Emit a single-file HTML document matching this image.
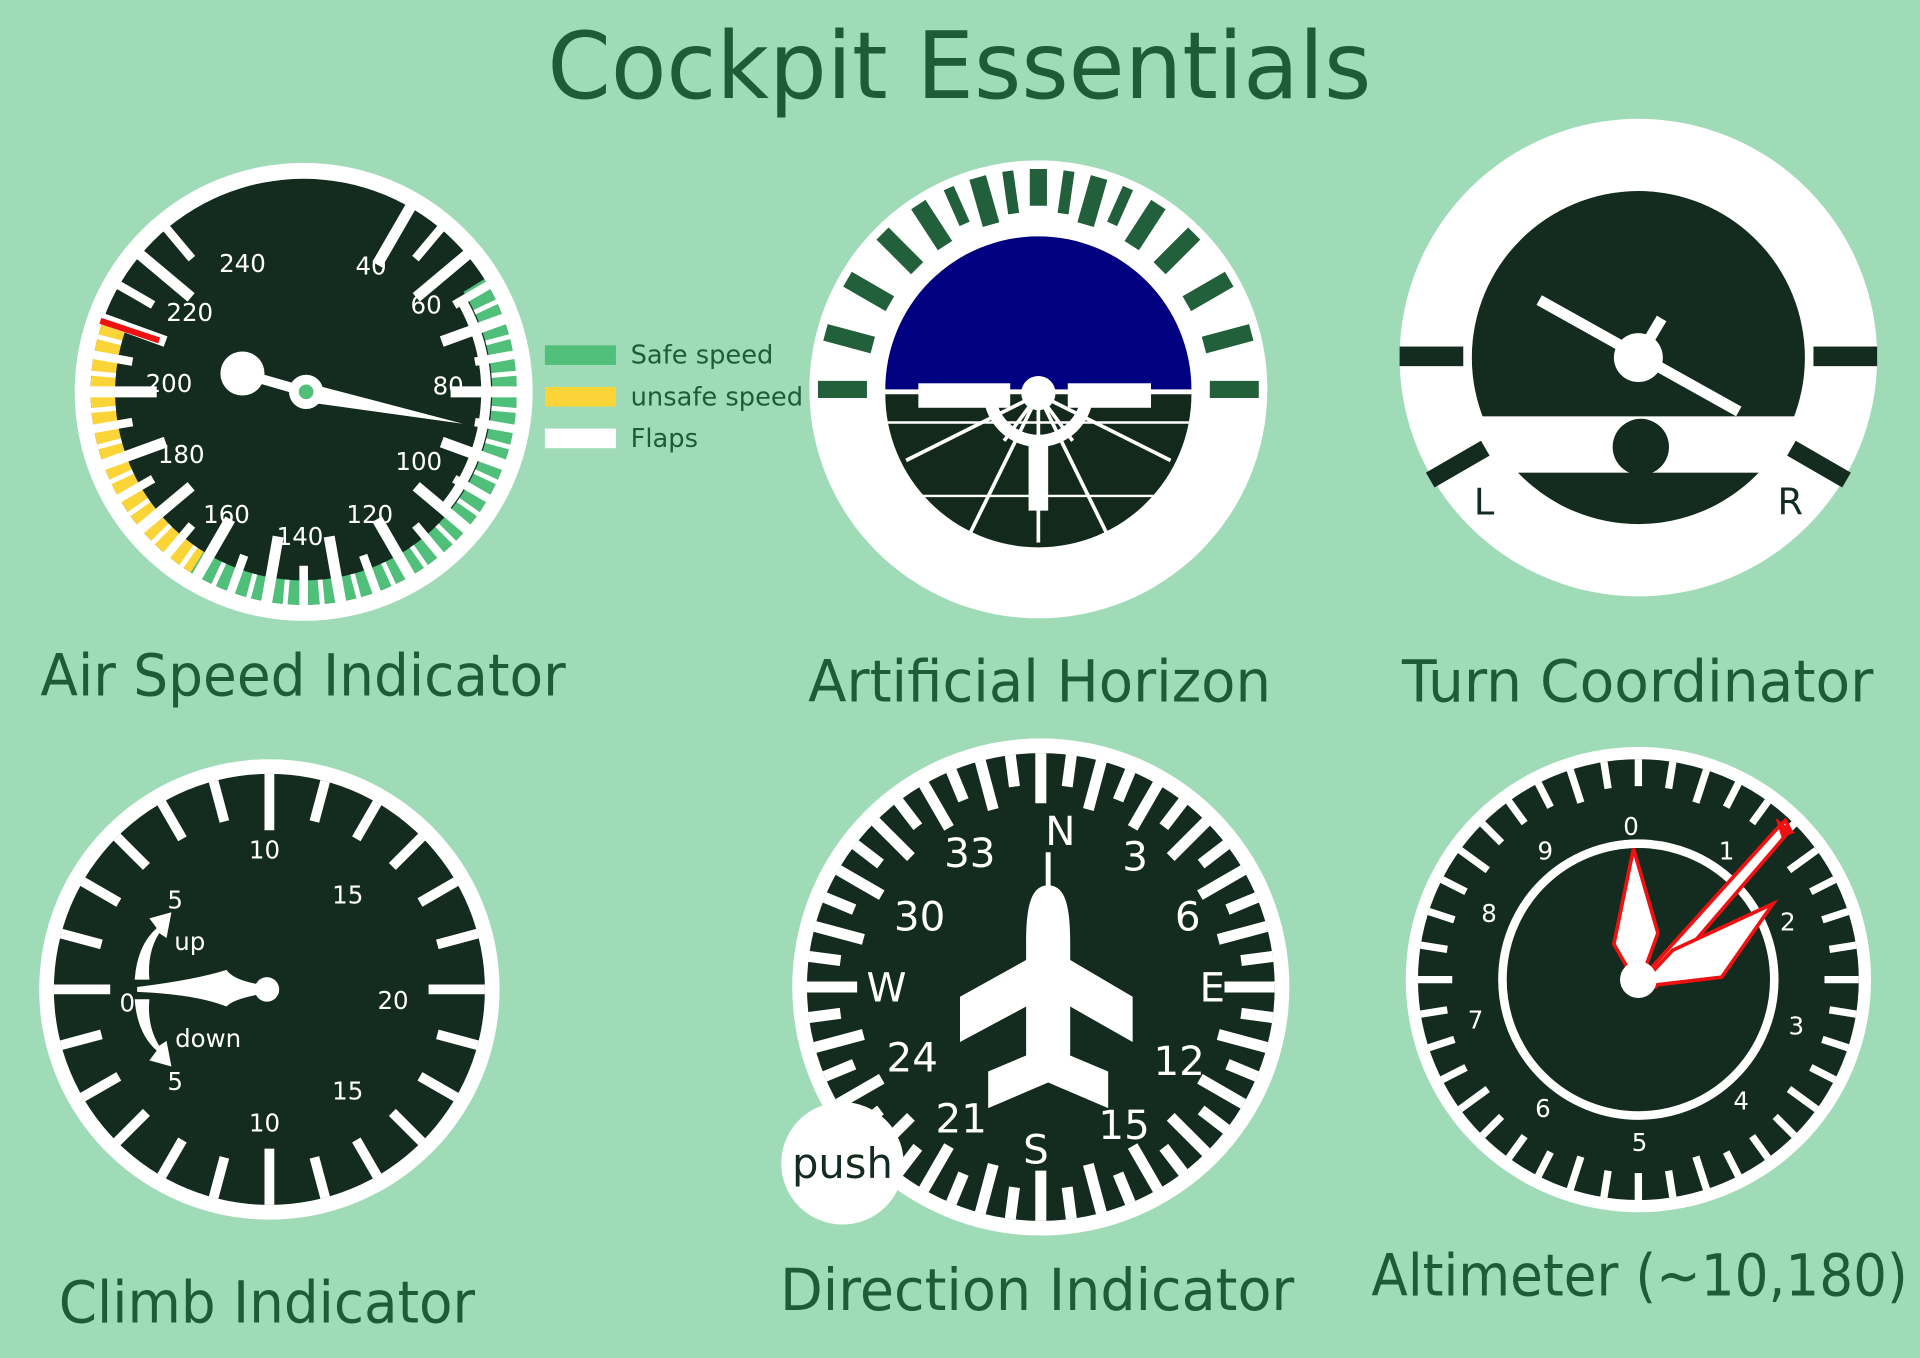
<!DOCTYPE html>
<html><head><meta charset="utf-8"><style>
html,body{margin:0;padding:0;background:#9fdbb6;}
svg{display:block}
text{font-family:"DejaVu Sans","Liberation Sans",sans-serif;}
</style></head><body>
<svg id="s" width="1920" height="1358" viewBox="0 0 1568 1109" xmlns="http://www.w3.org/2000/svg">
<rect width="1568" height="1109" fill="#9fdbb6"/>
<text x="447" y="80" textLength="673" lengthAdjust="spacingAndGlyphs" font-size="76" fill="#1e5c36" font-family="DejaVu Sans, sans-serif">Cockpit Essentials</text>

<!-- Air speed -->
<circle cx="248" cy="320" r="187" fill="#fff"/>
<circle cx="248" cy="320" r="174" fill="#142b1f"/>
<g id="asband"></g>
<g id="asticks"></g>
<line x1="82" y1="262" x2="130" y2="278" stroke="#e11" stroke-width="5"/>
<g fill="#fff" font-size="20" text-anchor="middle">
<text x="198" y="222">240</text><text x="303" y="224">40</text>
<text x="155" y="262">220</text><text x="348" y="256">60</text>
<text x="138" y="320">200</text><text x="366" y="322">80</text>
<text x="148" y="378">180</text><text x="342" y="384">100</text>
<text x="185" y="427">160</text><text x="302" y="427">120</text>
<text x="245" y="445">140</text>
</g>
<circle cx="198" cy="305" r="18" fill="#fff"/>
<line x1="198" y1="305" x2="250" y2="320" stroke="#fff" stroke-width="8"/>
<polygon points="248,312 378,346 248,328" fill="#fff"/>
<circle cx="250" cy="320" r="14" fill="#fff"/>
<circle cx="250" cy="320" r="6" fill="#4fbf7a"/>
<rect x="445" y="282" width="58" height="16" fill="#4fbf7a"/>
<rect x="445" y="316" width="58" height="16" fill="#fbd438"/>
<rect x="445" y="350" width="58" height="16" fill="#fff"/>
<g fill="#1e5c36" font-size="21" font-family="DejaVu Sans, sans-serif">
<text x="515" y="297">Safe speed</text><text x="515" y="331">unsafe speed</text><text x="515" y="365">Flaps</text>
</g>
<text x="33" y="568" textLength="429" lengthAdjust="spacingAndGlyphs" font-size="47" fill="#1e5c36" font-family="DejaVu Sans, sans-serif">Air Speed Indicator</text>

<!-- Artificial horizon -->
<circle cx="848" cy="318" r="187" fill="#fff"/>
<path d="M723,318 A125,125 0 0 1 973,318 Z" fill="#000080"/>
<path d="M723,322 A125,125 0 0 0 973,322 Z" fill="#12291b"/>
<g id="ahticks"></g>
<g stroke="#fff" stroke-width="3">
<line x1="848" y1="322" x2="740" y2="376"/><line x1="848" y1="322" x2="956" y2="376"/>
<line x1="848" y1="322" x2="790" y2="440"/><line x1="848" y1="322" x2="906" y2="440"/>
<line x1="848" y1="322" x2="820" y2="360"/><line x1="848" y1="322" x2="876" y2="360"/>
<line x1="848" y1="322" x2="848" y2="443"/>
<line x1="718" y1="345" x2="978" y2="345" stroke-width="2"/>
<line x1="718" y1="405" x2="978" y2="405" stroke-width="2"/>
</g>
<rect x="750" y="313" width="75" height="20" fill="#fff"/>
<rect x="872" y="313" width="68" height="20" fill="#fff"/>
<path d="M808,320 A40,40 0 0 0 888,320" fill="none" stroke="#fff" stroke-width="10"/>
<rect x="840" y="360" width="16" height="57" fill="#fff"/>
<circle cx="848" cy="321" r="14" fill="#fff"/>
<text x="660" y="573" textLength="378" lengthAdjust="spacingAndGlyphs" font-size="47" fill="#1e5c36" font-family="DejaVu Sans, sans-serif">Artificial Horizon</text>

<!-- Turn coordinator -->
<circle cx="1338" cy="292" r="195" fill="#fff"/>
<circle cx="1338" cy="292" r="136" fill="#142b1f"/>
<rect x="1190" y="340" width="300" height="46" fill="#fff"/>
<circle cx="1340" cy="365" r="23" fill="#142b1f"/>
<rect x="1143" y="283" width="52" height="16" fill="#142b1f"/>
<rect x="1481" y="283" width="52" height="16" fill="#142b1f"/>
<line x1="1168" y1="392" x2="1213" y2="366" stroke="#142b1f" stroke-width="14"/>
<line x1="1508" y1="392" x2="1463" y2="366" stroke="#142b1f" stroke-width="14"/>
<text x="1212" y="420" text-anchor="middle" font-size="30" fill="#142b1f">L</text>
<text x="1462" y="420" text-anchor="middle" font-size="30" fill="#142b1f">R</text>
<line x1="1257" y1="245" x2="1420" y2="336" stroke="#fff" stroke-width="9"/>
<line x1="1338" y1="292" x2="1357" y2="260" stroke="#fff" stroke-width="9"/>
<circle cx="1338" cy="292" r="20" fill="#fff"/>
<text x="1145" y="573" textLength="385" lengthAdjust="spacingAndGlyphs" font-size="47" fill="#1e5c36" font-family="DejaVu Sans, sans-serif">Turn Coordinator</text>

<!-- Climb -->
<circle cx="220" cy="808" r="188" fill="#fff"/>
<circle cx="220" cy="808" r="176" fill="#142b1f"/>
<g id="clticks"></g>
<g fill="#fff" font-size="20" text-anchor="middle">
<text x="216" y="701">10</text><text x="284" y="738">15</text><text x="321" y="824">20</text>
<text x="284" y="898">15</text><text x="216" y="924">10</text>
<text x="143" y="742">5</text><text x="104" y="826">0</text><text x="143" y="890">5</text>
<text x="155" y="776">up</text><text x="170" y="855">down</text>
</g>
<path d="M110,800 Q112,772 128,758 L122,750 L140,745 L136,766 L130,762 Q120,778 122,800 Z" fill="#fff"/>
<path d="M110,816 Q112,844 128,858 L122,866 L140,871 L136,850 L130,854 Q120,838 122,816 Z" fill="#fff"/>
<path d="M112,806 Q160,800 185,792 Q190,800 212,804 L212,812 Q190,816 185,822 Q160,812 112,810 Z" fill="#fff"/>
<circle cx="218" cy="808" r="10" fill="#fff"/>
<text x="48" y="1080" textLength="340" lengthAdjust="spacingAndGlyphs" font-size="47" fill="#1e5c36" font-family="DejaVu Sans, sans-serif">Climb Indicator</text>

<!-- Direction -->
<circle cx="850" cy="806" r="203" fill="#fff"/>
<circle cx="850" cy="806" r="191" fill="#142b1f"/>
<g id="dirticks"></g>
<g fill="#fff" font-size="33" text-anchor="middle">
<text x="866" y="690">N</text><text x="927" y="711">3</text><text x="970" y="760">6</text>
<text x="990" y="818">E</text><text x="963" y="878">12</text><text x="918" y="930">15</text>
<text x="846" y="950">S</text><text x="785" y="925">21</text><text x="745" y="875">24</text>
<text x="724" y="818">W</text><text x="751" y="760">30</text><text x="792" y="708">33</text>
</g>
<line x1="856" y1="696" x2="856" y2="724" stroke="#fff" stroke-width="4"/>
<path d="M856,723 C842,723 838,740 838,770 L838,784 L784,814 L784,851 L838,822 L838,862 L807,875 L807,905 L856,884 L905,905 L905,875 L874,862 L874,822 L925,851 L925,814 L874,784 L874,770 C874,740 870,723 856,723 Z" fill="#fff"/>
<circle cx="688" cy="950" r="50" fill="#fff"/>
<text x="688" y="962" text-anchor="middle" font-size="34" fill="#142b1f" font-family="DejaVu Sans, sans-serif">push</text>
<text x="637" y="1070" textLength="420" lengthAdjust="spacingAndGlyphs" font-size="47" fill="#1e5c36" font-family="DejaVu Sans, sans-serif">Direction Indicator</text>

<!-- Altimeter -->
<circle cx="1338" cy="800" r="190" fill="#fff"/>
<circle cx="1338" cy="800" r="180" fill="#142b1f"/>
<g id="altticks"></g>
<circle cx="1338" cy="800" r="111" fill="none" stroke="#fff" stroke-width="7"/>
<g fill="#fff" font-size="20" text-anchor="middle">
<text x="1332" y="682">0</text><text x="1410" y="702">1</text><text x="1460" y="760">2</text>
<text x="1467" y="845">3</text><text x="1422" y="906">4</text><text x="1339" y="940">5</text>
<text x="1260" y="912">6</text><text x="1205" y="840">7</text><text x="1216" y="753">8</text>
<text x="1262" y="702">9</text>
</g>
<polygon points="1338,802 1450,678 1458,670 1462,678 1352,806" fill="#fff" stroke="#e11" stroke-width="3"/>
<polygon points="1450,668 1466,680 1455,684" fill="#e11"/>
<polygon points="1338,806 1318,771 1334,693 1354,762" fill="#fff" stroke="#e11" stroke-width="3"/>
<polygon points="1338,806 1366,776 1448,738 1406,798" fill="#fff" stroke="#e11" stroke-width="3"/>
<circle cx="1338" cy="800" r="15" fill="#fff"/>
<text x="1120" y="1058" textLength="438" lengthAdjust="spacingAndGlyphs" font-size="47" fill="#1e5c36" font-family="DejaVu Sans, sans-serif">Altimeter (~10,180)</text>
</svg>
<script>
var NS="http://www.w3.org/2000/svg";
function ln(g,cx,cy,a,r1,r2,w,c){var e=document.createElementNS(NS,"line");var t=a*Math.PI/180;
e.setAttribute("x1",cx+r1*Math.cos(t));e.setAttribute("y1",cy+r1*Math.sin(t));
e.setAttribute("x2",cx+r2*Math.cos(t));e.setAttribute("y2",cy+r2*Math.sin(t));
e.setAttribute("stroke",c);e.setAttribute("stroke-width",w);document.getElementById(g).appendChild(e);}
function arc(g,cx,cy,a1,a2,r,w,c){var e=document.createElementNS(NS,"path");var t1=a1*Math.PI/180,t2=a2*Math.PI/180;
var large=(a2-a1)>180?1:0;
e.setAttribute("d","M"+(cx+r*Math.cos(t1))+","+(cy+r*Math.sin(t1))+" A"+r+","+r+" 0 "+large+" 1 "+(cx+r*Math.cos(t2))+","+(cy+r*Math.sin(t2)));
e.setAttribute("fill","none");e.setAttribute("stroke",c);e.setAttribute("stroke-width",w);document.getElementById(g).appendChild(e);}
// air speed
arc("asband",248,320,-32,122,164,20,"#4fbf7a");
arc("asband",248,320,122,200,164,20,"#fbd438");
arc("asband",248,320,-30,40,149,8,"#fff");
for(var i=0;i<=60;i++){var a=-60+i*5; if(a>-60&&a<-60+0)continue; if(a>=240)break;
 if(i%4==0) ln("asticks",248,320,a,120,176,9,"#fff");
 else if(i%2==0) ln("asticks",248,320,a,142,176,7,"#fff");
 else if(a>-33&&a<201) ln("asticks",248,320,a,154,176,4,"#fff");}
// horizon
var ah=[[0,150,1],[8,145,0],[16,140,1],[24,148,0],[33,140,1],[45,140,1],[60,140,1],[75,140,1],[90,140,1]];
ah.forEach(function(p){[1,-1].forEach(function(s){if(p[0]==0&&s<0)return;ln("ahticks",848,318,-90+s*p[0],p[1],180,p[2]?14:9,"#225f3b");});});
// climb
for(var a=-180;a<180;a+=15){var big=(a==-90||a==0||a==90||a==-180);ln("clticks",220,808,a,big?130:142,176,8,"#fff");}
// direction
for(var a=0,i=0;a<360;a+=7.5,i++){ln("dirticks",850,806,a,(i%2==0)?150:165,191,9,"#fff");}
// altimeter
for(var a=0;a<360;a+=9){ln("altticks",1338,800,a,(a%36==0)?152:158,180,6,"#fff");}
</script>
</body></html>
